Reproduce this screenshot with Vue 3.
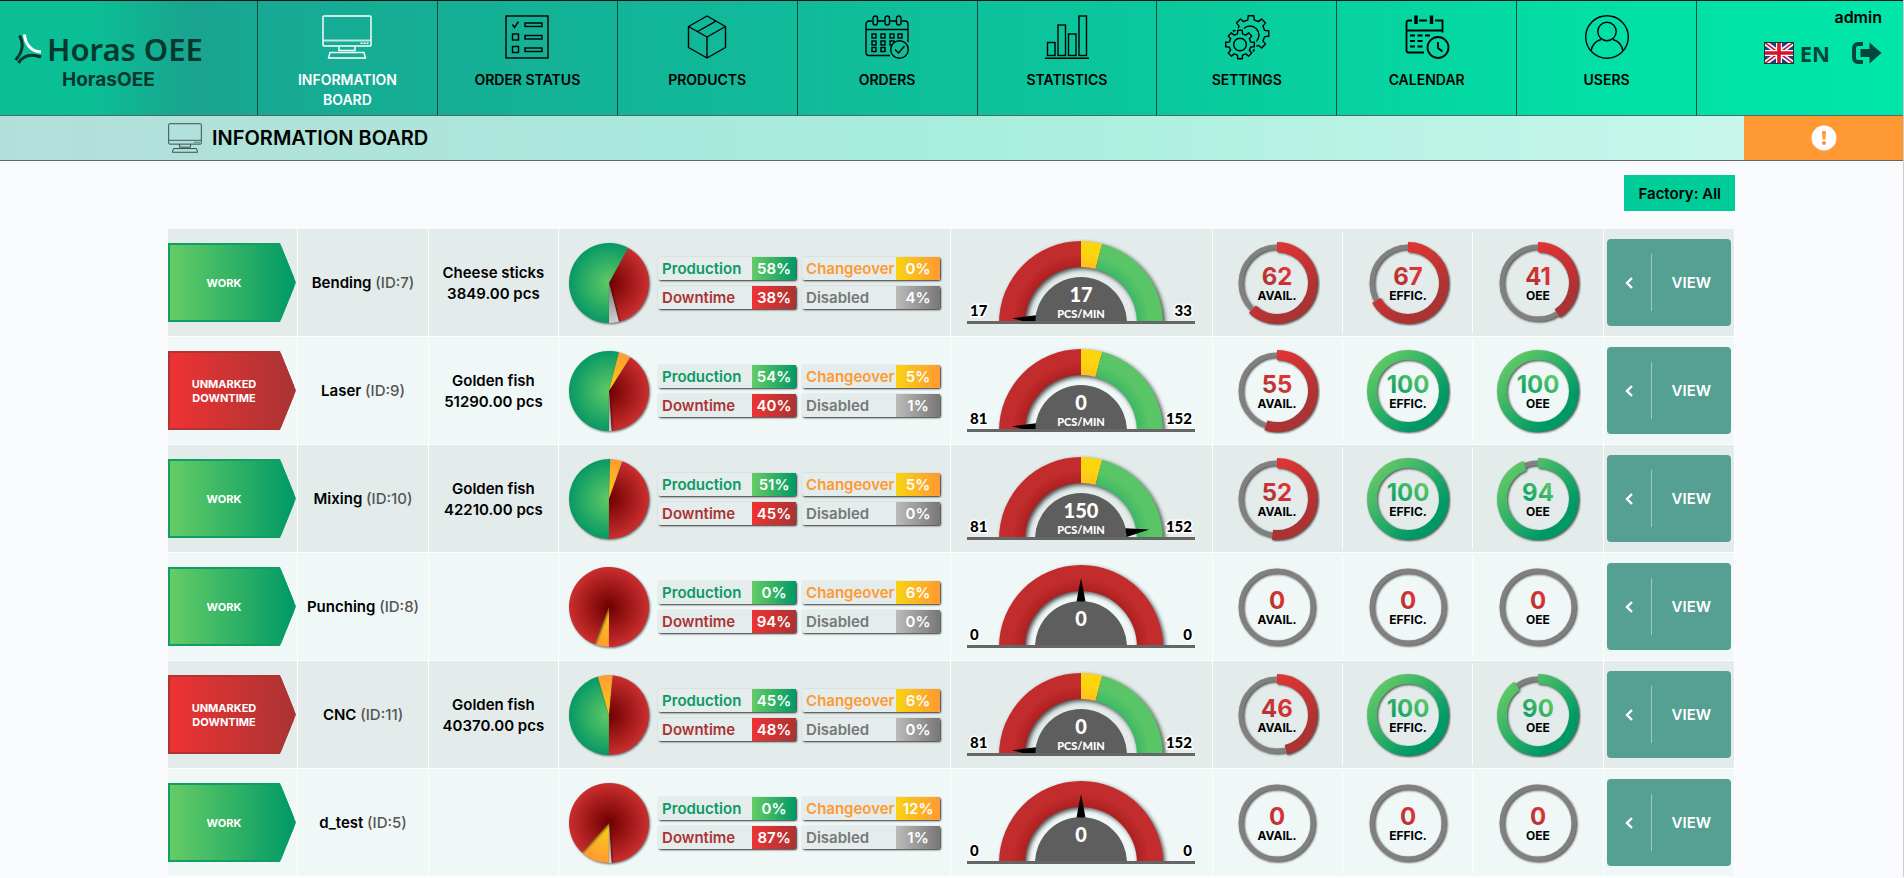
<script setup>
const navItems = [
  { id: 'board', label: 'INFORMATION BOARD', active: true },
  { id: 'status', label: 'ORDER STATUS' },
  { id: 'products', label: 'PRODUCTS' },
  { id: 'orders', label: 'ORDERS' },
  { id: 'statistics', label: 'STATISTICS' },
  { id: 'settings', label: 'SETTINGS' },
  { id: 'calendar', label: 'CALENDAR' },
  { id: 'users', label: 'USERS' },
]

const machines = [
  { name: 'Bending', id: 7, status: 'WORK', product: 'Cheese sticks', amount: '3849.00 pcs', shares: [58, 38, 0, 4], min: 17, max: 33, speed: 17, angle: -86, avail: 62, effic: 67, oee: 41 },
  { name: 'Laser', id: 9, status: 'UNMARKED DOWNTIME', product: 'Golden fish', amount: '51290.00 pcs', shares: [54, 40, 5, 1], min: 81, max: 152, speed: 0, angle: -86, avail: 55, effic: 100, oee: 100 },
  { name: 'Mixing', id: 10, status: 'WORK', product: 'Golden fish', amount: '42210.00 pcs', shares: [51, 45, 5, 0], min: 81, max: 152, speed: 150, angle: 82, avail: 52, effic: 100, oee: 94 },
  { name: 'Punching', id: 8, status: 'WORK', shares: [0, 94, 6, 0], min: 0, max: 0, speed: 0, angle: 0, avail: 0, effic: 0, oee: 0 },
  { name: 'CNC', id: 11, status: 'UNMARKED DOWNTIME', product: 'Golden fish', amount: '40370.00 pcs', shares: [45, 48, 6, 0], min: 81, max: 152, speed: 0, angle: -86, avail: 46, effic: 100, oee: 90 },
  { name: 'd_test', id: 5, status: 'WORK', shares: [0, 87, 12, 1], min: 0, max: 0, speed: 0, angle: 0, avail: 0, effic: 0, oee: 0 },
]

const shareKinds = [
  { label: 'Production', cls: 'production', i: 0 },
  { label: 'Changeover', cls: 'changeover', i: 2 },
  { label: 'Downtime', cls: 'downtime', i: 1 },
  { label: 'Disabled', cls: 'disabled', i: 3 },
]

const rings = [
  { key: 'avail', label: 'AVAIL.' },
  { key: 'effic', label: 'EFFIC.' },
  { key: 'oee', label: 'OEE' },
]

const tone = (v) => (v >= 90 ? 'Green' : 'Red')

// Point at a clockwise angle (degrees from 12 o'clock).
const polar = (cx, cy, r, deg) => {
  const a = (deg * Math.PI) / 180
  return `${(cx + r * Math.sin(a)).toFixed(2)} ${(cy - r * Math.cos(a)).toFixed(2)}`
}

// Slices run clockwise from 6 o'clock.
function slices(shares) {
  const order = [
    { fill: 'pieGreen', v: shares[0] },
    { fill: 'pieYellow', v: shares[2] },
    { fill: 'pieRed', v: shares[1] },
    { fill: 'pieGray', v: shares[3] },
  ]
  const total = order.reduce((s, o) => s + o.v, 0)
  let start = 180
  return order
    .filter((o) => o.v > 0)
    .map((o) => {
      const end = start + (o.v / total) * 360
      const large = end - start > 180 ? 1 : 0
      const d = `M46 46 L${polar(46, 46, 40, start)} A40 40 0 ${large} 1 ${polar(46, 46, 40, end)} Z`
      start = end
      return { d, fill: o.fill }
    })
}

// Arc of a progress ring from 12 o'clock; a full ring is closed.
function ringArc(v) {
  if (v >= 100) return 'M43 7A36 36 0 0 1 43 79A36 36 0 0 1 43 7Z'
  return `M43 7A36 36 0 ${v > 50 ? 1 : 0} 1 ${polar(43, 43, 36, v * 3.6)}`
}

const band = (from, to) =>
  `M${polar(114, 84, 82, from)} A82 82 0 0 1 ${polar(114, 84, 82, to)} L${polar(114, 84, 56, to)} A56 56 0 0 0 ${polar(114, 84, 56, from)} Z`

function gear(cx, cy, outer, inner) {
  const pts = []
  for (let i = 0; i < 8; i++) {
    const c = i * 45
    pts.push(polar(cx, cy, inner, c - 13), polar(cx, cy, outer, c - 9), polar(cx, cy, outer, c + 9), polar(cx, cy, inner, c + 13))
  }
  return 'M' + pts.join(' L') + ' Z'
}
const backGear = gear(26, 18.5, 18, 14)
const frontGear = gear(15, 29.5, 14.5, 11)
</script>

<template>
  <div class="page">
    <svg class="defs" width="0" height="0" aria-hidden="true">
      <defs>
        <radialGradient id="pieGreen" gradientUnits="userSpaceOnUse" cx="46" cy="46" r="40"><stop offset="0" stop-color="#62ca66" /><stop offset="1" stop-color="#079964" /></radialGradient>
        <radialGradient id="pieRed" gradientUnits="userSpaceOnUse" cx="46" cy="46" r="40"><stop offset="0" stop-color="#6e0000" /><stop offset="1" stop-color="#cb2e2e" /></radialGradient>
        <radialGradient id="pieYellow" gradientUnits="userSpaceOnUse" cx="46" cy="46" r="40"><stop offset="0" stop-color="#f8d312" /><stop offset="1" stop-color="#ff9a33" /></radialGradient>
        <radialGradient id="pieGray" gradientUnits="userSpaceOnUse" cx="46" cy="46" r="40"><stop offset="0" stop-color="#777" /><stop offset="1" stop-color="#d0d0d0" /></radialGradient>
        <linearGradient id="ringRed" gradientUnits="userSpaceOnUse" x1="18" y1="10" x2="70" y2="76"><stop offset="0" stop-color="#ee3333" /><stop offset="0.85" stop-color="#aa3333" /></linearGradient>
        <linearGradient id="ringGreen" gradientUnits="userSpaceOnUse" x1="14" y1="14" x2="72" y2="72"><stop offset="0" stop-color="#60c866" /><stop offset="0.85" stop-color="#009966" /></linearGradient>
        <linearGradient id="numRed" x1="0" y1="1" x2="1" y2="0"><stop offset="0.1" stop-color="#aa3333" /><stop offset="0.9" stop-color="#ea3333" /></linearGradient>
        <linearGradient id="numGreen" x1="0" y1="1" x2="1" y2="0"><stop offset="0.1" stop-color="#009966" /><stop offset="0.9" stop-color="#66cc66" /></linearGradient>
        <radialGradient id="bandRed" gradientUnits="userSpaceOnUse" cx="114" cy="84" r="82"><stop offset="0.68" stop-color="#ad2020" /><stop offset="0.84" stop-color="#c22c2c" /></radialGradient>
        <radialGradient id="bandYellow" gradientUnits="userSpaceOnUse" cx="114" cy="84" r="82"><stop offset="0.68" stop-color="#ffc01c" /><stop offset="0.84" stop-color="#fcd50f" /></radialGradient>
        <radialGradient id="bandGreen" gradientUnits="userSpaceOnUse" cx="114" cy="84" r="82"><stop offset="0.68" stop-color="#3db866" /><stop offset="0.84" stop-color="#5ac566" /></radialGradient>
        <clipPath id="aboveBase"><rect x="0" y="0" width="228" height="82" /></clipPath>
        <mask id="behindGear">
          <rect width="46" height="46" fill="#fff" />
          <path :d="frontGear" fill="#000" stroke="#000" stroke-width="4" />
        </mask>
        <symbol id="monitor" viewBox="0 0 50 44">
          <g fill="none" stroke="currentColor" stroke-width="1.4">
            <rect x="1" y="1" width="48" height="30" rx="1" />
            <path d="M1 25.500H49" stroke-width="2" stroke-opacity="0.7" />
            <path d="M17 31v4.500h16V31" />
            <path d="M8 37.500h34l1.500 5.500h-37z" />
            <path d="M38.500 28.300h8" stroke-dasharray="2 1" />
          </g>
        </symbol>
      </defs>
    </svg>

    <header class="top">
      <div class="brand">
        <div class="brand-main">
          <svg class="brand-icon" viewBox="0 0 28 30" aria-hidden="true">
            <g fill="none" stroke-width="3">
              <path d="M5.500 1.500C9.500 9 9 18 1.500 26" stroke="#04382f" />
              <path d="M4.500 29C9 21.500 17 19.500 27 23" stroke="#04382f" />
              <path d="M10.500 0.500C11 9.500 17 17.500 27 18" stroke="#fff" />
            </g>
          </svg>
          <span>Horas OEE</span>
        </div>
        <div class="brand-sub">HorasOEE</div>
      </div>

      <nav class="nav">
        <a v-for="n in navItems" :key="n.id" href="#" class="nav-item" :class="{ active: n.active }">
          <svg v-if="n.id === 'board'" width="50" height="44" aria-hidden="true"><use href="#monitor" /></svg>
          <svg v-else class="nav-icon" viewBox="0 0 44 44" width="44" height="44" aria-hidden="true">
            <g v-if="n.id === 'status'">
              <rect x="1" y="1" width="42" height="42" />
              <path d="M7.500 9.500l2 3 4-6" />
              <rect x="7.500" y="19" width="6" height="6" /><rect x="7.500" y="31.500" width="6" height="6" />
              <rect x="20" y="8" width="17" height="3.500" /><rect x="20" y="20.500" width="17" height="3.500" /><rect x="20" y="33" width="17" height="3.500" />
            </g>
            <g v-else-if="n.id === 'products'" stroke-linejoin="round">
              <path d="M22 1L3.500 11.500v21L22 43l18.500-10.500v-21z" />
              <path d="M3.500 11.500L22 22l18.500-10.500M22 22v21M12.500 16.500L31 6.200" />
            </g>
            <g v-else-if="n.id === 'orders'">
              <path d="M7 6H4a3 3 0 0 0-3 3v28.500a3 3 0 0 0 3 3h21M37 6h3a3 3 0 0 1 3 3v18M13 6h6M25 6h6M1 14.500h42" />
              <rect x="8" y="1" width="4.500" height="9" rx="2.200" /><rect x="20" y="1" width="4.500" height="9" rx="2.200" /><rect x="31.500" y="1" width="4.500" height="9" rx="2.200" />
              <g v-for="x in [7, 16, 25, 33]" :key="x">
                <rect :x="x" y="19" width="4" height="4" />
                <rect v-if="x < 30" :x="x" y="26" width="4" height="4" />
                <rect v-if="x < 20" :x="x" y="32.500" width="4" height="4" />
              </g>
              <circle class="opaque" cx="34.500" cy="34.500" r="8.800" />
              <path d="M30 34.500l3.500 3.500 6-7" />
            </g>
            <g v-else-if="n.id === 'statistics'">
              <path d="M0 43.200h44" stroke-width="1.600" />
              <rect x="2.500" y="27.500" width="7.500" height="13" /><rect x="13" y="10" width="7.500" height="30.500" />
              <rect x="23.500" y="19" width="7.500" height="21.500" /><rect x="34" y="1" width="7.500" height="39.500" />
            </g>
            <g v-else-if="n.id === 'settings'" stroke-linejoin="round">
              <g mask="url(#behindGear)"><path :d="backGear" /><circle cx="25" cy="20" r="9" /></g>
              <path :d="frontGear" /><circle cx="15" cy="29.500" r="6.300" />
            </g>
            <g v-else-if="n.id === 'calendar'">
              <path d="M7 5.500H3.500a2 2 0 0 0-2 2v28a2 2 0 0 0 2 2H19M14 5.500h8M30 5.500h7.500v12M1.500 15.500h36" stroke-width="1.800" />
              <path d="M11 0.500v8.500M26.500 0.500v8.500" stroke-width="3.400" />
              <path d="M5 20.500h20M5 26h13M5 31.500h13" stroke-width="1.800" stroke-dasharray="5 2.500" />
              <circle cx="33" cy="32.500" r="10.500" stroke-width="1.800" />
              <path d="M33 27v6l4.500 3.500" stroke-width="1.800" />
            </g>
            <g v-else>
              <circle cx="22" cy="22" r="21.300" />
              <circle cx="22" cy="16.500" r="9.200" />
              <path d="M6 36c1-6 5-10 10-11.500M38 36c-1-6-5-10-10-11.500" />
            </g>
          </svg>
          <span class="nav-label">{{ n.label }}</span>
        </a>
      </nav>

      <div class="user">
        <div class="user-name">admin</div>
        <div class="user-tools">
          <a href="#" class="lang">
            <svg class="flag" viewBox="0 0 30 22" width="30" height="22" aria-hidden="true">
              <rect width="30" height="22" fill="#1c3f94" />
              <path d="M0 0L30 22M30 0L0 22" stroke="#fff" stroke-width="5" />
              <path d="M0 0L30 22M30 0L0 22" stroke="#d8102c" stroke-width="1.600" />
              <path d="M15 0V22M0 11H30" stroke="#fff" stroke-width="6" />
              <path d="M15 0V22M0 11H30" stroke="#d8102c" stroke-width="3.600" />
              <rect x="0.500" y="0.500" width="29" height="21" fill="none" stroke="#12382f" />
            </svg>
            <span>EN</span>
          </a>
          <a href="#" aria-label="Log out">
            <svg viewBox="0 0 30 24" width="30" height="24" aria-hidden="true">
              <path d="M11 3H6a4 4 0 0 0-4 4v10a4 4 0 0 0 4 4h5" fill="none" stroke="#04463a" stroke-width="4" />
              <path d="M8.500 8h9V1.500L29.500 12l-12 10.500V16h-9z" fill="#04463a" />
            </svg>
          </a>
        </div>
      </div>
    </header>

    <div class="subbar">
      <h1 class="title">
        <svg width="34" height="30" aria-hidden="true"><use href="#monitor" /></svg>
        <span>INFORMATION BOARD</span>
      </h1>
      <button class="alert" type="button" aria-label="Alerts">
        <svg viewBox="0 0 26 26" width="26" height="26" aria-hidden="true">
          <circle cx="13" cy="13" r="12.500" fill="#fff" />
          <path d="M11 6h4l-0.600 8.500h-2.800z" fill="#ff9933" /><circle cx="13" cy="18" r="2.100" fill="#ff9933" />
        </svg>
      </button>
    </div>

    <main class="content">
      <div class="filters"><button class="factory" type="button">Factory: All</button></div>

      <table class="board">
        <colgroup>
          <col class="w1" /><col class="w1" /><col class="w1" /><col class="w3" /><col class="w2" />
          <col class="w1" /><col class="w1" /><col class="w1" /><col />
        </colgroup>
        <tbody>
          <tr v-for="m in machines" :key="m.id">
            <td>
              <div class="status" :class="m.status === 'WORK' ? 'ok' : 'bad'">
                <div class="status-fill">{{ m.status }}</div>
              </div>
            </td>
            <td class="text">{{ m.name }} <span class="muted">(ID:{{ m.id }})</span></td>
            <td class="text"><template v-if="m.product">{{ m.product }}<br />{{ m.amount }}</template></td>
            <td>
              <div class="shares">
                <svg class="pie" viewBox="0 0 92 92" width="92" height="92" aria-hidden="true">
                  <path v-for="s in slices(m.shares)" :key="s.fill" :d="s.d" :fill="`url(#${s.fill})`" />
                </svg>
                <div class="share-grid">
                  <div v-for="k in shareKinds" :key="k.cls" class="share" :class="k.cls">
                    <span class="share-label">{{ k.label }}</span>
                    <span class="share-value">{{ m.shares[k.i] }}%</span>
                  </div>
                </div>
              </div>
            </td>
            <td>
              <svg class="gauge" viewBox="0 0 228 88" width="228" height="88" role="img">
                <g clip-path="url(#aboveBase)">
                  <g class="bands">
                    <path v-if="!m.max" :d="band(-90, 90)" fill="url(#bandRed)" />
                    <template v-else>
                      <path :d="band(-90, 0)" fill="url(#bandRed)" />
                      <path :d="band(0, 15)" fill="url(#bandYellow)" />
                      <path :d="band(15, 90)" fill="url(#bandGreen)" />
                    </template>
                  </g>
                  <circle cx="114" cy="84" r="46" fill="#5e5e5e" />
                </g>
                <path d="M109.500 38.500L114 15l4.500 23.500z" :transform="`rotate(${m.angle} 114 84)`" />
                <rect x="0" y="82" width="228" height="3" fill="#666" />
                <text class="speed" x="114" y="63">{{ m.speed }}</text>
                <text v-if="m.max" class="unit" x="114" y="79">PCS/MIN</text>
                <text class="limit" x="3" y="77">{{ m.min }}</text>
                <text class="limit end" x="225" y="77">{{ m.max }}</text>
              </svg>
            </td>
            <td v-for="(r, i) in rings" :key="r.key">
              <div class="ring-cell" :class="{ divided: i < 2 }">
                <svg viewBox="0 0 86 86" width="86" height="86" role="img">
                  <g class="ring">
                    <circle cx="43" cy="43" r="36" stroke="#808080" stroke-width="5" />
                    <path v-if="m[r.key]" :d="ringArc(m[r.key])" stroke-width="10" :stroke="`url(#ring${tone(m[r.key])})`" />
                  </g>
                  <text class="ring-num" x="43" y="45" :fill="`url(#num${tone(m[r.key])})`">{{ m[r.key] }}</text>
                  <text class="ring-label" x="43" y="60">{{ r.label }}</text>
                </svg>
              </div>
            </td>
            <td>
              <button class="view" type="button">
                <span class="view-arrow">
                  <svg viewBox="0 0 8 12" width="8" height="12" aria-hidden="true"><path d="M7 1L2 6l5 5" fill="none" stroke="#fff" stroke-width="2.400" /></svg>
                </span>
                <span class="view-text">VIEW</span>
              </button>
            </td>
          </tr>
        </tbody>
      </table>
    </main>
  </div>
</template>

<style>
html,
body {
  background: #f8fafc;
  overflow: hidden;
}
</style>

<style scoped>
.page {
  border-right: 1px solid #ccc;
  font-family: Inter, "Open Sans", sans-serif;
  color: #000;
  font-size: 15px;
  font-weight: 600;
}
.page * {
  box-sizing: border-box;
}
.defs {
  position: absolute;
}
a {
  color: inherit;
  text-decoration: none;
}
button {
  font: inherit;
  border: 0;
  padding: 0;
  cursor: pointer;
}

.top {
  display: flex;
  height: 116px;
  border-top: 1px solid #111;
  border-bottom: 1px solid #566;
  background: linear-gradient(90deg, #0abf96 0, #0abf96 90px, #19a48f 190px, #17a993 257px, #12b699 35%, #0ac79d 60%, #02dfa5 84%, #00e6a8 100%);
}
.brand {
  flex: 0 0 257px;
  padding: 28px 0 0 14px;
  color: #04382f;
}
.brand-main {
  display: flex;
  align-items: center;
  gap: 5px;
  font: 600 31px/40px "Noto Sans", "Open Sans", sans-serif;
  white-space: nowrap;
}
.brand-icon {
  width: 28px;
  height: 30px;
}
.brand-sub {
  padding-left: 48px;
  font-size: 19px;
  line-height: 22px;
  font-weight: 700;
}
.nav {
  flex: 1;
  display: grid;
  grid-template-columns: repeat(8, 1fr);
  border-right: 1px solid #0d4a3c;
}
.nav-item {
  display: flex;
  flex-direction: column;
  align-items: center;
  padding-top: 14px;
  border-left: 1px solid #0d4a3c;
}
.nav-item.active {
  color: #fff;
}
.nav-icon {
  fill: none;
  stroke: #000;
  stroke-width: 1.4;
  overflow: visible;
}
.opaque {
  fill: #0fbe9b;
}
.nav-label {
  width: 130px;
  margin-top: 11px;
  font-size: 14px;
  line-height: 20px;
  text-align: center;
}
.user {
  flex: 0 0 206px;
  padding: 5px 21px 0 0;
  text-align: right;
}
.user-name {
  font-size: 16px;
  line-height: 22px;
}
.user-tools {
  display: flex;
  justify-content: flex-end;
  align-items: center;
  gap: 22px;
  margin-top: 11px;
}
.user-tools a {
  display: flex;
  align-items: center;
}
.user-tools .lang {
  gap: 6px;
  font: 700 22px/28px "Noto Sans", "Open Sans", sans-serif;
  color: #04463a;
}

.subbar {
  display: flex;
  justify-content: space-between;
  height: 45px;
  border-bottom: 1px solid #666;
  background: linear-gradient(90deg, #b2dfda 0, #aee4da 20%, #a9e8dd 34%, #a8eedc 50%, #c8f7ec 92%);
}
.title {
  display: flex;
  align-items: center;
  gap: 10px;
  margin: 0;
  padding-left: 168px;
  font-size: 20px;
  font-weight: 600;
}
.title svg {
  color: #33494a;
}
.alert {
  display: flex;
  align-items: center;
  justify-content: center;
  width: 159px;
  background: #ff9933;
}

.content {
  padding: 0 168px;
}
.filters {
  display: flex;
  justify-content: flex-end;
  padding: 14px 0 18px;
}
.factory {
  height: 36px;
  padding: 0 14px;
  background: #00cc99;
}
.board {
  width: 100%;
  table-layout: fixed;
  border-collapse: separate;
  border-spacing: 0;
}
.w1 {
  width: 8.32%;
}
.w2 {
  width: 16.7%;
}
.w3 {
  width: 25%;
}
.board td {
  height: 108px;
  padding: 0;
  vertical-align: middle;
  border-right: 1px solid #fff;
  border-bottom: 1px solid #fff;
  background: #f0f7f7;
}
.board tr:nth-child(odd) td {
  background: #e4eceb;
}
.board td:nth-child(6),
.board td:nth-child(7) {
  border-right: 0;
}
.text {
  text-align: center;
  line-height: 21px;
}
.muted {
  color: #555;
  font-weight: 500;
}

.status {
  width: 128px;
  height: 79px;
  padding: 2px;
  clip-path: polygon(0 0, 112px 0, 100% 50%, 112px 100%, 0 100%);
}
.status-fill {
  display: flex;
  align-items: center;
  justify-content: center;
  height: 100%;
  padding: 0 28px 0 12px;
  font-size: 11px;
  line-height: 14px;
  font-weight: 700;
  text-align: center;
  color: #fff;
}
.ok {
  background: #0f9f66;
}
.ok .status-fill {
  background: linear-gradient(90deg, #66cc66, #009966);
}
.bad {
  background: #b23333;
}
.bad .status-fill {
  background: linear-gradient(90deg, #ee3333, #aa3333);
}

.shares {
  display: flex;
  align-items: center;
  padding-left: 4px;
}
.pie path {
  filter: drop-shadow(1px 1px 1px rgba(0, 0, 0, 0.6));
}
.share-grid {
  display: grid;
  grid-template-columns: 138px 138px;
  gap: 6px;
  margin-left: 3px;
}
.share {
  display: flex;
  height: 23px;
  border-radius: 2px;
  background: #e4ecec;
  font-size: 15px;
  line-height: 23px;
  box-shadow: 1px 1px 2px #333;
}
.share-label {
  flex: 1;
  min-width: 0;
  padding-left: 4px;
  white-space: nowrap;
}
.share-value {
  width: 44px;
  text-align: center;
  color: #fff;
}
.production .share-label {
  color: #0c9965;
}
.production .share-value {
  background: linear-gradient(90deg, #66cc66, #009966);
}
.downtime .share-label {
  color: #aa3333;
}
.downtime .share-value {
  background: linear-gradient(90deg, #ee3333, #aa3333);
}
.changeover .share-label {
  color: #ff9933;
}
.changeover .share-value {
  background: linear-gradient(90deg, #f8d312, #ff9933);
}
.disabled .share-label {
  color: #777;
}
.disabled .share-value {
  background: linear-gradient(90deg, #bbb, #777);
}

.gauge {
  display: block;
  margin: 0 auto;
  font-family: Lato, "Open Sans", sans-serif;
  font-weight: 900;
}
.bands {
  filter: drop-shadow(2px 2px 2px rgba(0, 0, 0, 0.7));
}
.speed {
  font-size: 20px;
  fill: #fff;
  text-anchor: middle;
}
.unit {
  font-size: 11px;
  fill: #fff;
  text-anchor: middle;
}
.limit {
  font-size: 15px;
  paint-order: stroke;
  stroke: #fff;
  stroke-width: 3px;
}
.end {
  text-anchor: end;
}

.ring-cell {
  display: flex;
  align-items: center;
  justify-content: center;
  height: 101px;
}
.divided {
  border-right: 1px solid #fff;
}
.ring {
  fill: none;
  filter: drop-shadow(1px 1px 1px rgba(0, 0, 0, 0.7));
}
.ring-num {
  font-size: 24px;
  font-weight: 700;
  text-anchor: middle;
}
.ring-label {
  font-size: 12px;
  font-weight: 700;
  text-anchor: middle;
}

.view {
  display: flex;
  align-items: center;
  width: calc(100% - 6px);
  height: 87px;
  margin: 0 3px;
  border-radius: 4px;
  background: #569f93;
  color: #fff;
}
.view-arrow {
  display: flex;
  align-items: center;
  justify-content: center;
  width: 45px;
  height: 57px;
  border-right: 1px solid #9dc9c2;
}
.view-text {
  flex: 1;
  text-align: center;
}
</style>
